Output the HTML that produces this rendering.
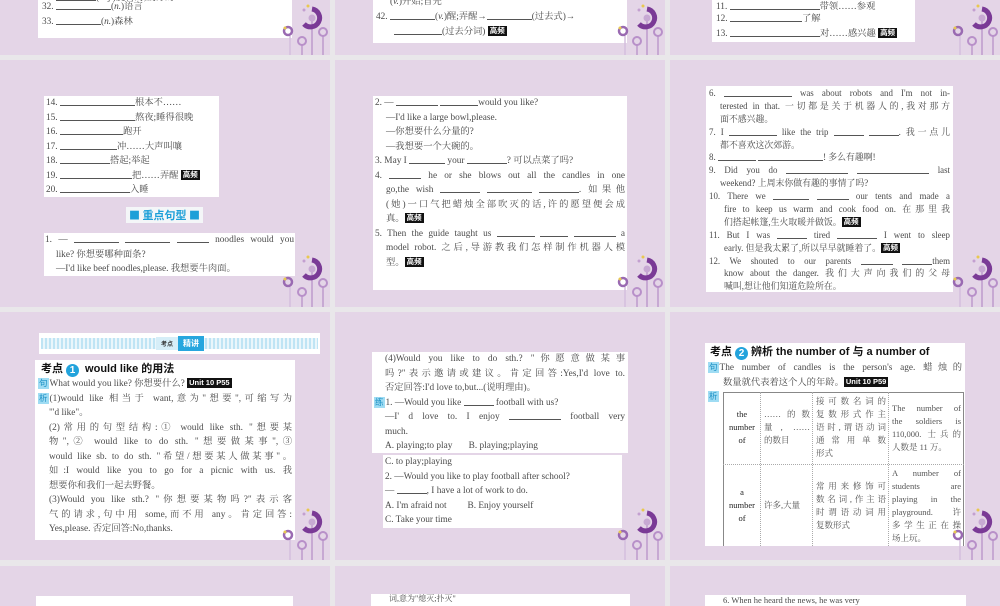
<!DOCTYPE html>
<html><head><meta charset="utf-8"><style>
*{margin:0;padding:0;box-sizing:border-box}
body{width:1000px;height:600px;background:#e9e7ea;position:relative;overflow:hidden;font-family:"Liberation Serif","Noto Serif CJK SC",serif;color:#4a4a4a}
.s{position:absolute;background:#e4d5e7;overflow:hidden}
.b{position:absolute;background:#fff;font-size:9.3px;white-space:nowrap;overflow:hidden}
.b div{height:14.5px;line-height:14.5px}
.j{text-align:justify;text-align-last:justify}
.u{display:inline-block;border-bottom:1px solid #555;height:10px;vertical-align:-1px}
.g{background:#111;color:#fff;font-family:"Liberation Sans","Noto Sans CJK SC",sans-serif;font-size:7.5px;font-weight:bold;padding:0 2px;line-height:10px;display:inline-block;vertical-align:1px}
.d{position:absolute;width:48px;height:56px}
.i{padding-left:11px}
.ic{display:inline-block;background:#9fdcf3;color:#1a8fc4;font-size:8.5px;line-height:11px;padding:0 1px;margin-right:1px;font-family:"Noto Sans CJK SC",sans-serif}
.h{font-family:"Liberation Sans","Noto Sans CJK SC",sans-serif;font-weight:bold;color:#111;font-size:11px}
.n{display:inline-block;width:13px;height:13px;border-radius:50%;background:#22a3dc;color:#fff;text-align:center;line-height:13px;font-size:10px;margin:0 3px;vertical-align:-1px}
.b .t{position:absolute;font-size:8.5px;color:#555;height:auto;line-height:13px}
.b .t div{height:13px;line-height:13px}
</style></head><body>
<svg width="0" height="0" style="position:absolute"><defs><g id="dc">
<line x1="30" y1="20" x2="30" y2="56" stroke="#c7a9d3" stroke-width="2"/>
<line x1="20" y1="44" x2="20" y2="56" stroke="#c7a9d3" stroke-width="2"/>
<line x1="41" y1="36" x2="41" y2="56" stroke="#c7a9d3" stroke-width="2"/>
<line x1="8" y1="36" x2="8" y2="56" stroke="#d4bfdd" stroke-width="1.5"/>
<path d="M30 9 A9 9 0 1 1 22 24" fill="none" stroke="#7a3a96" stroke-width="5"/>
<circle cx="30" cy="18" r="3.5" fill="#c7a9d3"/>
<circle cx="20" cy="41" r="4" fill="none" stroke="#b890c9" stroke-width="2"/>
<circle cx="41" cy="32" r="4" fill="none" stroke="#b890c9" stroke-width="2"/>
<circle cx="6" cy="31" r="4" fill="none" stroke="#9a6ab2" stroke-width="2.5"/>
<circle cx="3" cy="28" r="1.5" fill="#e8c850"/>
<circle cx="26" cy="6" r="1.5" fill="#e8c850"/>
<circle cx="22" cy="10" r="1.5" fill="#c3a0d0"/>
</g></defs></svg>

<!-- ROW 1 -->
<div class="s" style="left:0;top:0;width:330px;height:55px">
<div class="b" style="left:38px;top:0;width:254px;height:38px;padding-left:4px">
<div style="height:6px;line-height:0;margin-top:-9px">31. <span class="u" style="width:40px"></span>(adj.)旋转的;疲劳的</div>
<div style="margin-top:3px">32. <span class="u" style="width:55px"></span>(<i>n.</i>)语言</div>
<div>33. <span class="u" style="width:45px"></span>(<i>n.</i>)森林</div>
</div>
<svg class="d" style="left:282px;top:0"><use href="#dc"/></svg>
</div>
<div class="s" style="left:335px;top:0;width:330px;height:55px">
<div class="b" style="left:38px;top:0;width:254px;height:43px;padding-left:3px">
<div style="height:10px;line-height:4px;padding-left:14px">(<i>v.</i>)开始;首先</div>
<div>42. <span class="u" style="width:45px"></span>(<i>v.</i>)醒;弄醒→<span class="u" style="width:45px"></span>(过去式)→</div>
<div style="padding-left:18px"><span class="u" style="width:48px"></span>(过去分词) <span class="g">高频</span></div>
</div>
<svg class="d" style="left:282px;top:0"><use href="#dc"/></svg>
</div>
<div class="s" style="left:670px;top:0;width:330px;height:55px">
<div class="b" style="left:42px;top:0;width:203px;height:42px;padding-left:4px">
<div style="height:12px;line-height:8px">11. <span class="u" style="width:90px"></span>带领……参观</div>
<div>12. <span class="u" style="width:72px"></span>了解</div>
<div>13. <span class="u" style="width:90px"></span>对……感兴趣 <span class="g">高频</span></div>
</div>
<svg class="d" style="left:282px;top:0"><use href="#dc"/></svg>
</div>

<!-- ROW 2 -->
<div class="s" style="left:0;top:60px;width:330px;height:247px">
<div class="b" style="left:44px;top:36px;width:175px;height:101px;padding:0 2px">
<div>14. <span class="u" style="width:75px"></span>根本不……</div>
<div>15. <span class="u" style="width:75px"></span>熬夜;睡得很晚</div>
<div>16. <span class="u" style="width:63px"></span>跑开</div>
<div>17. <span class="u" style="width:57px"></span>冲……大声叫嚷</div>
<div>18. <span class="u" style="width:50px"></span>搭起;举起</div>
<div>19. <span class="u" style="width:72px"></span>把……弄醒 <span class="g">高频</span></div>
<div>20. <span class="u" style="width:70px"></span>入睡</div>
</div>
<div style="position:absolute;left:126px;top:147px;width:77px;height:16px;background:#f4f6f8;color:#1c9fd8;font:bold 11px/16px 'Noto Sans CJK SC',sans-serif;text-align:center">■ 重点句型 ■</div>
<div class="b" style="left:44px;top:173px;width:251px;height:43px;padding:0 1px">
<div class="j">1. — <span class="u" style="width:45px"></span> <span class="u" style="width:45px"></span> <span class="u" style="width:32px"></span> noodles would you</div>
<div style="padding-left:11px">like? 你想要哪种面条?</div>
<div style="padding-left:11px">—I'd like beef noodles,please. 我想要牛肉面。</div>
</div>
<svg class="d" style="left:282px;top:191px"><use href="#dc"/></svg>
</div>

<div class="s" style="left:335px;top:60px;width:330px;height:247px">
<div class="b" style="left:38px;top:36px;width:254px;height:194px;padding:0 2px">
<div>2. — <span class="u" style="width:42px"></span> <span class="u" style="width:38px"></span>would you like?</div>
<div class="i">—I'd like a large bowl,please.</div>
<div class="i">—你想要什么分量的?</div>
<div class="i">—我想要一个大碗的。</div>
<div>3. May I <span class="u" style="width:36px"></span> your <span class="u" style="width:40px"></span>? 可以点菜了吗?</div>
<div class="j">4. <span class="u" style="width:32px"></span> he or she blows out all the candles in one</div>
<div class="j i">go,the wish <span class="u" style="width:40px"></span> <span class="u" style="width:45px"></span> <span class="u" style="width:40px"></span>. 如果他</div>
<div class="j i">(她)一口气把蜡烛全部吹灭的话,许的愿望便会成</div>
<div class="i">真。<span class="g">高频</span></div>
<div class="j">5. Then the guide taught us <span class="u" style="width:38px"></span> <span class="u" style="width:28px"></span> <span class="u" style="width:42px"></span> a</div>
<div class="j i">model robot. 之后,导游教我们怎样制作机器人模</div>
<div class="i">型。<span class="g">高频</span></div>
</div>
<svg class="d" style="left:282px;top:191px"><use href="#dc"/></svg>
</div>

<div class="s" style="left:670px;top:60px;width:330px;height:247px">
<div class="b" style="left:36px;top:26px;width:247px;height:206px;padding:1px 3px;font-size:8.9px">
<style>.c3 div{height:12.9px;line-height:12.9px}</style>
<div class="c3">
<div class="j">6. <span class="u" style="width:68px"></span> was about robots and I'm not in-</div>
<div class="j i">terested in that. 一切都是关于机器人的,我对那方</div>
<div class="i">面不感兴趣。</div>
<div class="j">7. I <span class="u" style="width:48px"></span> like the trip <span class="u" style="width:30px"></span> <span class="u" style="width:30px"></span>. 我一点儿</div>
<div class="i">都不喜欢这次郊游。</div>
<div>8. <span class="u" style="width:38px"></span> <span class="u" style="width:65px"></span>! 多么有趣啊!</div>
<div class="j">9. Did you do <span class="u" style="width:62px"></span> <span class="u" style="width:72px"></span> last</div>
<div class="i">weekend? 上周末你做有趣的事情了吗?</div>
<div class="j">10. There we <span class="u" style="width:36px"></span> <span class="u" style="width:32px"></span> our tents and made a</div>
<div class="j" style="padding-left:15px">fire to keep us warm and cook food on. 在那里我</div>
<div style="padding-left:15px">们搭起帐篷,生火取暖并做饭。<span class="g">高频</span></div>
<div class="j">11. But I was <span class="u" style="width:30px"></span> tired <span class="u" style="width:40px"></span> I went to sleep</div>
<div style="padding-left:15px">early. 但是我太累了,所以早早就睡着了。<span class="g">高频</span></div>
<div class="j">12. We shouted to our parents <span class="u" style="width:32px"></span> <span class="u" style="width:30px"></span>them</div>
<div class="j" style="padding-left:15px">know about the danger. 我们大声向我们的父母</div>
<div style="padding-left:15px">喊叫,想让他们知道危险所在。</div>
</div></div>
<svg class="d" style="left:282px;top:191px"><use href="#dc"/></svg>
</div>

<!-- ROW 3 -->
<div class="s" style="left:0;top:312px;width:330px;height:248px">
<div style="position:absolute;left:39px;top:21px;width:281px;height:21px;background:#fff">
<div style="position:absolute;left:2px;right:2px;top:5px;height:11px;background:repeating-linear-gradient(90deg,#bfe4f4 0 2px,#eaf6fb 2px 4px)"></div>
<div style="position:absolute;left:117px;top:4px;width:22px;height:13px;background:#d6eef8;font:bold 6px/13px 'Noto Sans CJK SC',sans-serif;color:#333;text-align:center">考点</div>
<div style="position:absolute;left:139px;top:3px;width:26px;height:15px;background:#27a6de;font:bold 8px/15px 'Noto Sans CJK SC',sans-serif;color:#fff;text-align:center">精讲</div>
</div>
<div class="b" style="left:35px;top:48px;width:260px;height:180px;padding:0 3px">
<div class="h" style="height:17px;line-height:18px;padding-left:3px">考点<span class="n">1</span> would like 的用法</div>
<div><span class="ic">句</span>What would you like? 你想要什么? <span class="g">Unit 10 P55</span></div>
<div class="j"><span class="ic">析</span>(1)would like 相当于 want,意为"想要",可缩写为</div>
<div class="i">"'d like"。</div>
<div class="j i">(2)常用的句型结构:① would like sth. "想要某</div>
<div class="j i">物",② would like to do sth. "想要做某事",③</div>
<div class="j i">would like sb. to do sth. "希望/想要某人做某事"。</div>
<div class="j i">如:I would like you to go for a picnic with us. 我</div>
<div class="i">想要你和我们一起去野餐。</div>
<div class="j i">(3)Would you like sth.? "你想要某物吗?"表示客</div>
<div class="j i">气的请求,句中用 some,而不用 any。肯定回答:</div>
<div class="i">Yes,please. 否定回答:No,thanks.</div>
</div>
<svg class="d" style="left:282px;top:192px"><use href="#dc"/></svg>
</div>

<div class="s" style="left:335px;top:312px;width:330px;height:248px">
<div class="b" style="left:37px;top:40px;width:256px;height:101px;padding:0 3px 0 2px">
<div class="j i">(4)Would you like to do sth.? "你愿意做某事</div>
<div class="j i">吗?"表示邀请或建议。肯定回答:Yes,I'd love to.</div>
<div class="i">否定回答:I'd love to,but...(说明理由)。</div>
<div><span class="ic">练</span>1. —Would you like <span class="u" style="width:30px"></span> football with us?</div>
<div class="j i">—I' d love to. I enjoy <span class="u" style="width:52px"></span> football very</div>
<div class="i">much.</div>
<div class="i">A. playing;to play &nbsp;&nbsp;&nbsp;&nbsp;&nbsp;&nbsp;B. playing;playing</div>
</div>
<div class="b" style="left:48px;top:143px;width:239px;height:73px;padding:0 2px">
<div>C. to play;playing</div>
<div>2. —Would you like to play football after school?</div>
<div>— <span class="u" style="width:30px"></span>, I have a lot of work to do.</div>
<div>A. I'm afraid not &nbsp;&nbsp;&nbsp;&nbsp;&nbsp;&nbsp;&nbsp;&nbsp;B. Enjoy yourself</div>
<div>C. Take your time</div>
</div>
<svg class="d" style="left:282px;top:192px"><use href="#dc"/></svg>
</div>

<div class="s" style="left:670px;top:312px;width:330px;height:248px">
<div class="b" style="left:35px;top:31px;width:260px;height:203px;padding:0 3px">
<div class="h" style="height:18px;line-height:18px;padding-left:2px">考点<span class="n">2</span>辨析 the number of 与 a number of</div>
<div class="j"><span class="ic">句</span>The number of candles is the person's age. 蜡烛的</div>
<div style="padding-left:15px">数量就代表着这个人的年龄。<span class="g">Unit 10 P59</span></div>
<div><span class="ic">析</span></div>
<div style="position:absolute;left:18px;top:49px;width:241px;height:154px;border:1px solid #888;border-bottom:none"></div>
<div style="position:absolute;left:55px;top:49px;height:154px;border-left:1px dotted #aaa"></div>
<div style="position:absolute;left:107px;top:49px;height:154px;border-left:1px dotted #aaa"></div>
<div style="position:absolute;left:183px;top:49px;height:154px;border-left:1px dotted #aaa"></div>
<div style="position:absolute;left:18px;top:121px;width:241px;border-top:1px dotted #aaa"></div>
<div class="t" style="left:19px;top:65px;width:36px;text-align:center;color:#222"><div>the</div><div>number</div><div>of</div></div>
<div class="t" style="left:59px;top:65px;width:46px"><div class="j">……的数</div><div class="j">量, ……</div><div>的数目</div></div>
<div class="t" style="left:111px;top:52px;width:70px"><div class="j">接可数名词的</div><div class="j">复数形式作主</div><div class="j">语时,谓语动词</div><div class="j">通常用单数</div><div>形式</div></div>
<div class="t" style="left:187px;top:59px;width:69px"><div class="j">The number of</div><div class="j">the soldiers is</div><div class="j">110,000. 士兵的</div><div>人数是 11 万。</div></div>
<div class="t" style="left:19px;top:143px;width:36px;text-align:center;color:#222"><div>a</div><div>number</div><div>of</div></div>
<div class="t" style="left:59px;top:156px;width:46px"><div>许多,大量</div></div>
<div class="t" style="left:111px;top:137px;width:70px"><div class="j">常用来修饰可</div><div class="j">数名词,作主语</div><div class="j">时谓语动词用</div><div>复数形式</div></div>
<div class="t" style="left:187px;top:124px;width:69px"><div class="j">A number of</div><div class="j">students are</div><div class="j">playing in the</div><div class="j">playground. 许</div><div class="j">多学生正在操</div><div>场上玩。</div></div>
</div>
<svg class="d" style="left:282px;top:192px"><use href="#dc"/></svg>
</div>

<!-- ROW 4 -->
<div class="s" style="left:0;top:566px;width:330px;height:40px">
<div class="b" style="left:36px;top:30px;width:257px;height:10px"></div>
</div>
<div class="s" style="left:335px;top:566px;width:330px;height:40px">
<div class="b" style="left:36px;top:28px;width:259px;height:12px;font-size:8px;line-height:10px;padding-left:18px">词,意为"熄灭;扑灭"</div>
</div>
<div class="s" style="left:670px;top:566px;width:330px;height:40px">
<div class="b" style="left:35px;top:29px;width:261px;height:11px;font-size:8.5px;padding-left:18px;line-height:10px">6. When he heard the news, he was very</div>
</div>
</body></html>
